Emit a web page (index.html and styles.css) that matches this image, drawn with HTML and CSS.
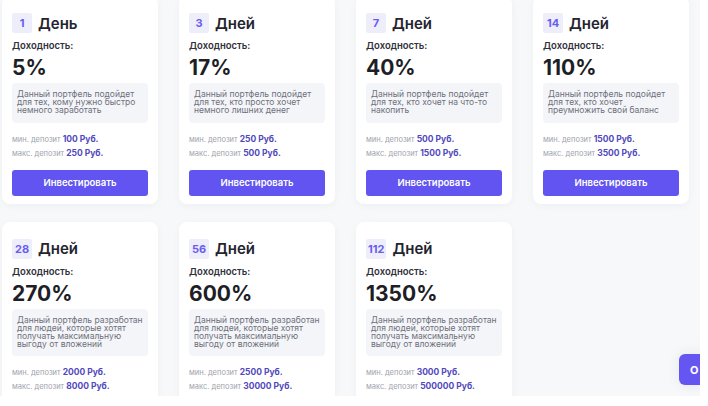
FILE: index.html
```html
<!DOCTYPE html>
<html lang="ru">
  <head>
    <meta charset="UTF-8" />
    <title>Инвестиционные планы</title>
    <link rel="stylesheet" href="styles.css">
  </head>
  <body>
    <div class="screen">
      <div class="plans">
        <div class="plan">
          <div class="plan-head"><span class="days">1</span> День</div>
          <div class="label">Доходность:</div>
          <div class="percent">5%</div>
          <div class="desc">Данный портфель подойдет для тех, кому нужно быстро немного заработать</div>
          <div class="limits">
            <div>мин. депозит <b>100 Руб.</b></div>
            <div>макс. депозит <b>250 Руб.</b></div>
          </div>
          <button class="invest">Инвестировать</button>
        </div>
        <div class="plan">
          <div class="plan-head"><span class="days">3</span> Дней</div>
          <div class="label">Доходность:</div>
          <div class="percent">17%</div>
          <div class="desc">Данный портфель подойдет для тех, кто просто хочет немного лишних денег</div>
          <div class="limits">
            <div>мин. депозит <b>250 Руб.</b></div>
            <div>макс. депозит <b>500 Руб.</b></div>
          </div>
          <button class="invest">Инвестировать</button>
        </div>
        <div class="plan">
          <div class="plan-head"><span class="days">7</span> Дней</div>
          <div class="label">Доходность:</div>
          <div class="percent">40%</div>
          <div class="desc">Данный портфель подойдет для тех, кто хочет на что-то накопить</div>
          <div class="limits">
            <div>мин. депозит <b>500 Руб.</b></div>
            <div>макс. депозит <b>1500 Руб.</b></div>
          </div>
          <button class="invest">Инвестировать</button>
        </div>
        <div class="plan">
          <div class="plan-head"><span class="days">14</span> Дней</div>
          <div class="label">Доходность:</div>
          <div class="percent">110%</div>
          <div class="desc">Данный портфель подойдет для тех, кто хочет преумножить свой баланс</div>
          <div class="limits">
            <div>мин. депозит <b>1500 Руб.</b></div>
            <div>макс. депозит <b>3500 Руб.</b></div>
          </div>
          <button class="invest">Инвестировать</button>
        </div>
        <div class="plan">
          <div class="plan-head"><span class="days">28</span> Дней</div>
          <div class="label">Доходность:</div>
          <div class="percent">270%</div>
          <div class="desc">Данный портфель разработан для людей, которые хотят получать максимальную выгоду от вложений</div>
          <div class="limits">
            <div>мин. депозит <b>2000 Руб.</b></div>
            <div>макс. депозит <b>8000 Руб.</b></div>
          </div>
        </div>
        <div class="plan">
          <div class="plan-head"><span class="days">56</span> Дней</div>
          <div class="label">Доходность:</div>
          <div class="percent">600%</div>
          <div class="desc">Данный портфель разработан для людей, которые хотят получать максимальную выгоду от вложений</div>
          <div class="limits">
            <div>мин. депозит <b>2500 Руб.</b></div>
            <div>макс. депозит <b>30000 Руб.</b></div>
          </div>
        </div>
        <div class="plan">
          <div class="plan-head"><span class="days">112</span> Дней</div>
          <div class="label">Доходность:</div>
          <div class="percent">1350%</div>
          <div class="desc">Данный портфель разработан для людей, которые хотят получать максимальную выгоду от вложений</div>
          <div class="limits">
            <div>мин. депозит <b>3000 Руб.</b></div>
            <div>макс. депозит <b>500000 Руб.</b></div>
          </div>
        </div>
      </div>
      <button class="chat">О</button>
    </div>
  </body>
</html>
```

FILE: styles.css
```css
body {
  margin: 0;
  background: #fff;
  font-family: Inter, "Noto Sans", sans-serif;
  color: #24242e;
}
.screen {
  position: relative;
  width: 700px;
  height: 396px;
  overflow: hidden;
  background: #f7f8fa;
}
.plans {
  display: grid;
  grid-template-columns: repeat(4, 156px);
  column-gap: 21px;
  row-gap: 18px;
  align-items: start;
  margin-top: -4px;
  padding-left: 2px;
}
.plan {
  background: #fff;
  border-radius: 8px;
  padding: 17px 10px 8px;
  box-shadow: 0 2px 8px rgba(30, 35, 60, 0.04);
}
.plan-head {
  display: flex;
  align-items: center;
  gap: 6px;
  font-size: 15px;
  font-weight: 600;
  height: 20px;
}
.days {
  min-width: 20px;
  height: 20px;
  padding: 0 2px;
  box-sizing: border-box;
  display: flex;
  align-items: center;
  justify-content: center;
  background: #eeeefb;
  color: #6a5cf0;
  border-radius: 2px;
  font-size: 11px;
  font-weight: 700;
}
.label {
  margin-top: 7px;
  font-size: 9.5px;
  line-height: 12px;
  font-weight: 600;
  color: #30303a;
}
.percent {
  margin-top: 4px;
  font-size: 21px;
  line-height: 24px;
  font-weight: 700;
  color: #1e1e26;
}
.desc {
  margin-top: 3px;
  background: #f4f5f8;
  border-radius: 4px;
  padding: 7px 5px 8px;
  font-size: 8.5px;
  line-height: 8.2px;
  color: #6e707c;
}
.limits {
  margin-top: 10px;
  font-size: 7.5px;
  line-height: 14px;
  color: #a0a2ad;
}
.limits div {
  height: 14px;
}
.limits b {
  font-size: 8.5px;
  line-height: 10px;
  font-weight: 700;
  color: #5048bd;
}
.invest {
  display: block;
  width: 100%;
  height: 26px;
  margin-top: 9px;
  border: none;
  border-radius: 3px;
  background: #6154f0;
  color: #fff;
  font-family: inherit;
  font-size: 9.5px;
  font-weight: 600;
}
.chat {
  position: absolute;
  left: 679px;
  top: 354px;
  width: 30px;
  height: 31px;
  padding: 0 0 0 11px;
  text-align: left;
  border: none;
  border-radius: 6px;
  background: #6556f2;
  color: #fff;
  font-family: inherit;
  font-size: 11px;
  font-weight: 700;
  box-shadow: 0 0 14px rgba(40, 40, 60, 0.08);
}
```
